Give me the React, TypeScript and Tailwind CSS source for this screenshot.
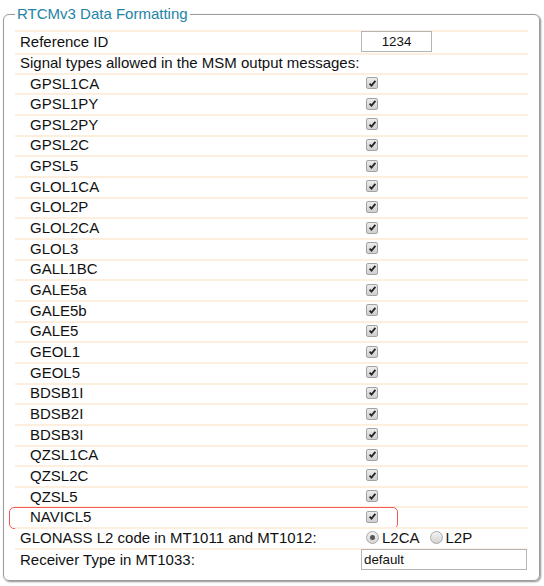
const signals = [
  "GPSL1CA",
  "GPSL1PY",
  "GPSL2PY",
  "GPSL2C",
  "GPSL5",
  "GLOL1CA",
  "GLOL2P",
  "GLOL2CA",
  "GLOL3",
  "GALL1BC",
  "GALE5a",
  "GALE5b",
  "GALE5",
  "GEOL1",
  "GEOL5",
  "BDSB1I",
  "BDSB2I",
  "BDSB3I",
  "QZSL1CA",
  "QZSL2C",
  "QZSL5",
  "NAVICL5"
];

function CheckBox() {
  return (
    <span className="flex h-[12px] w-[12px] items-center justify-center rounded-[2px] border border-[#a3a3a3] bg-gradient-to-b from-[#ececec] to-[#cfcfcf]">
      <svg width="9" height="9" viewBox="0 0 9 9">
        <path d="M1.6 4.6 L3.5 6.6 L7.4 1.9" fill="none" stroke="#262626" strokeWidth="1.8" />
      </svg>
    </span>
  );
}

function Radio({ checked }: { checked?: boolean }) {
  return (
    <span className="flex h-[13px] w-[13px] items-center justify-center rounded-full border border-[#a8a8a8] bg-gradient-to-b from-[#f2f2f2] to-[#d4d4d4]">
      {checked ? <span className="h-[5px] w-[5px] rounded-full bg-[#555]" /> : null}
    </span>
  );
}

function Row({
  label,
  indent,
  className,
  children
}: {
  label: string;
  indent?: boolean;
  className?: string;
  children?: React.ReactNode;
}) {
  return (
    <div className={`relative flex items-center border-t-2 border-[#fdeedd] pb-[2px] ${className ?? "h-[20.67px]"}`}>
      <div className={`w-[346px] shrink-0 whitespace-nowrap ${indent ? "pl-[15px]" : "pl-[5px]"}`}>{label}</div>
      <div className="flex flex-1 items-center">{children}</div>
    </div>
  );
}

export default function App() {
  return (
    <div className="min-h-[586px] bg-white pl-[3px] pr-[4px] text-[15px] leading-none text-[#111] [font-family:'Liberation_Sans',Arial,sans-serif]">
      <fieldset className="rounded-[6px] border border-[#9c9c9c] px-[11px] pb-[9px] pt-[2px] shadow-[1px_1px_2px_rgba(0,0,0,0.45)]">
        <legend className="px-[2px] text-[15px] leading-[28px] text-[#2484a6]">RTCMv3 Data Formatting</legend>

        <Row label="Reference ID" className="h-[22.7px]">
          <input
            readOnly
            value="1234"
            className="h-[21px] w-[71px] border border-[#b5b5b5] text-center text-[13.33px] outline-none"
          />
        </Row>

        <Row label="Signal types allowed in the MSM output messages:" className="h-[20px]" />

        {signals.map((s) => (
          <Row key={s} label={s} indent>
            <span className="pl-[5px]">
              <CheckBox />
            </span>
            {s === "NAVICL5" ? (
              <span className="pointer-events-none absolute -left-[6px] -top-[1px] h-[22px] w-[389px] rounded-[5px] border-[1.5px] border-[#f25a5a]" />
            ) : null}
          </Row>
        ))}

        <Row label="GLONASS L2 code in MT1011 and MT1012:">
          <label className="flex items-center gap-[3px] pl-[5px]">
            <Radio checked />
            <span>L2CA</span>
          </label>
          <label className="ml-[10px] flex items-center gap-[3px]">
            <Radio />
            <span>L2P</span>
          </label>
        </Row>

        <Row label="Receiver Type in MT1033:" className="h-[23px]">
          <input
            readOnly
            value="default"
            className="h-[21px] w-[166px] border border-[#b5b5b5] px-[2px] text-[13.33px] outline-none"
          />
        </Row>
      </fieldset>
    </div>
  );
}
